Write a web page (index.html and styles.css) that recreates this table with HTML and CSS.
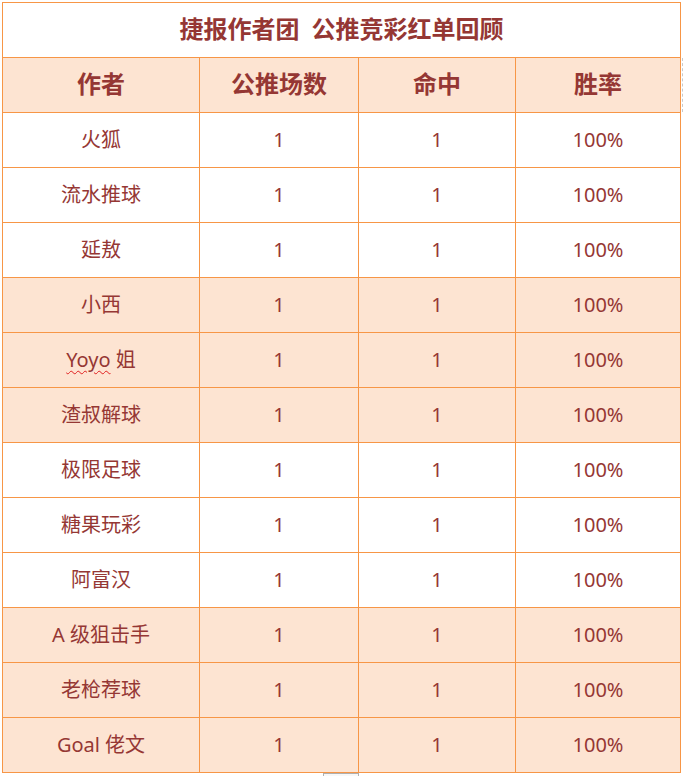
FILE: index.html
```html
<!DOCTYPE html>
<html lang="zh-CN">
<head>
<meta charset="utf-8">
<title>捷报作者团 公推竞彩红单回顾</title>
<link rel="stylesheet" href="styles.css">
</head>
<body>
<div class="page">
  <div class="grid">
    <div class="cell title">捷报作者团&ensp;公推竞彩红单回顾</div>
    <div class="cell head">作者</div>
    <div class="cell head">公推场数</div>
    <div class="cell head">命中</div>
    <div class="cell head last">胜率</div>

    <div class="cell">火狐</div><div class="cell">1</div><div class="cell">1</div><div class="cell">100%</div>
    <div class="cell">流水推球</div><div class="cell">1</div><div class="cell">1</div><div class="cell">100%</div>
    <div class="cell">延敖</div><div class="cell">1</div><div class="cell">1</div><div class="cell">100%</div>

    <div class="cell alt">小西</div><div class="cell alt">1</div><div class="cell alt">1</div><div class="cell alt">100%</div>
    <div class="cell alt"><span class="spell">Yoyo</span>&nbsp;姐</div><div class="cell alt">1</div><div class="cell alt">1</div><div class="cell alt">100%</div>
    <div class="cell alt">渣叔解球</div><div class="cell alt">1</div><div class="cell alt">1</div><div class="cell alt">100%</div>

    <div class="cell">极限足球</div><div class="cell">1</div><div class="cell">1</div><div class="cell">100%</div>
    <div class="cell">糖果玩彩</div><div class="cell">1</div><div class="cell">1</div><div class="cell">100%</div>
    <div class="cell">阿富汉</div><div class="cell">1</div><div class="cell">1</div><div class="cell">100%</div>

    <div class="cell alt">A 级狙击手</div><div class="cell alt">1</div><div class="cell alt">1</div><div class="cell alt">100%</div>
    <div class="cell alt">老枪荐球</div><div class="cell alt">1</div><div class="cell alt">1</div><div class="cell alt">100%</div>
    <div class="cell alt">Goal 佬文</div><div class="cell alt">1</div><div class="cell alt">1</div><div class="cell alt">100%</div>
  </div>
  <div class="stub"></div>
</div>
</body>
</html>
```

FILE: styles.css
```css
html, body {
  margin: 0;
  padding: 0;
  background: #ffffff;
}

.page {
  padding: 2px 0 0 2px;
  font-family: "Noto Sans", "Noto Sans CJK SC", sans-serif;
  color: #953734;
}

.grid {
  display: grid;
  grid-template-columns: 196px 158px 156px 164px;
  grid-auto-rows: 54px;
  gap: 1px;
  padding: 1px;
  width: max-content;
  background: #f79646;
}

.cell {
  display: flex;
  align-items: center;
  justify-content: center;
  background: #ffffff;
  font-size: 20px;
  line-height: 1;
  white-space: nowrap;
}

.cell.alt {
  background: #fde4d2;
}

.title {
  grid-column: 1 / -1;
  font-size: 24px;
  font-weight: 700;
  padding-bottom: 2px;
}

.head {
  background: #fde4d2;
  font-size: 24px;
  font-weight: 700;
  padding-bottom: 2px;
}

.head.last {
  position: relative;
}

.head.last::after {
  content: "";
  position: absolute;
  top: 0;
  bottom: 0;
  right: -3px;
  border-right: 1px dashed #c8c8c8;
}

.spell {
  text-decoration: underline wavy #e02020;
  text-decoration-thickness: 1px;
  text-underline-offset: 3px;
}

.stub {
  margin-left: 321px;
  width: 34px;
  height: 4px;
  border: 1px solid #b0b0b0;
  border-bottom: none;
  background: #f8f8f8;
}
```
